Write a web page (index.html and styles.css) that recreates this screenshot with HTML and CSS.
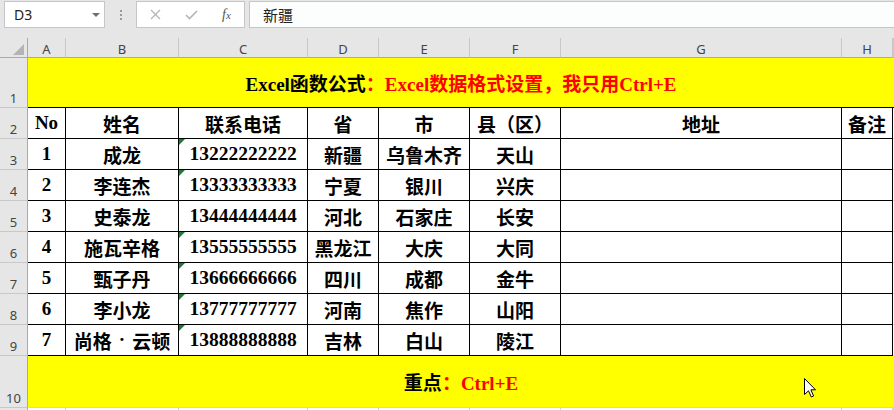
FILE: index.html
```html
<!DOCTYPE html>
<html lang="zh-CN">

<head>
  <meta charset="UTF-8">
  <title>Excel数据格式设置</title>
  <link rel="stylesheet" href="styles.css">
</head>

<body>

  <div class="bar">
    <div class="namebox">D3<i class="drop"></i></div>
    <div class="grip"><i></i><i></i><i></i></div>
    <div class="btns">
      <svg width="11" height="11" viewBox="0 0 11 11"><path d="M1 1L10 10M10 1L1 10" stroke="#b5b5b5" stroke-width="1.3" fill="none"/></svg>
      <svg width="13" height="10" viewBox="0 0 13 10"><path d="M1 5L4.5 8.5L12 1" stroke="#b5b5b5" stroke-width="1.6" fill="none"/></svg>
      <span class="fx">f<em>x</em></span>
    </div>
    <div class="formula">新疆</div>
  </div>

  <div class="sheet">
    <!-- 列标 -->
    <div class="corner"><svg width="11" height="11" viewBox="0 0 11 11"><path d="M0 11H11V0Z" fill="#b4b4b4"/></svg></div>
    <div class="col">A</div>
    <div class="col">B</div>
    <div class="col">C</div>
    <div class="col">D</div>
    <div class="col">E</div>
    <div class="col">F</div>
    <div class="col">G</div>
    <div class="col">H</div>
    <div class="col"></div>

    <!-- 第1行 标题 -->
    <div class="row">1</div>
    <div class="banner">Excel函数公式<span class="red">：Excel数据格式设置，我只用Ctrl+E</span></div>

    <!-- 第2行 表头 -->
    <div class="row">2</div>
    <div class="c">No</div>
    <div class="c">姓名</div>
    <div class="c">联系电话</div>
    <div class="c">省</div>
    <div class="c">市</div>
    <div class="c">县（区）</div>
    <div class="c">地址</div>
    <div class="c">备注</div>
    <div class="cut"></div>

    <div class="row">3</div>
    <div class="c">1</div>
    <div class="c">成龙</div>
    <div class="c t mark">13222222222</div>
    <div class="c">新疆</div>
    <div class="c">乌鲁木齐</div>
    <div class="c">天山</div>
    <div class="c"></div>
    <div class="c"></div>
    <div class="cut"></div>

    <div class="row">4</div>
    <div class="c">2</div>
    <div class="c">李连杰</div>
    <div class="c t mark">13333333333</div>
    <div class="c">宁夏</div>
    <div class="c">银川</div>
    <div class="c">兴庆</div>
    <div class="c"></div>
    <div class="c"></div>
    <div class="cut"></div>

    <div class="row">5</div>
    <div class="c">3</div>
    <div class="c">史泰龙</div>
    <div class="c t">13444444444</div>
    <div class="c">河北</div>
    <div class="c">石家庄</div>
    <div class="c">长安</div>
    <div class="c"></div>
    <div class="c"></div>
    <div class="cut"></div>

    <div class="row">6</div>
    <div class="c">4</div>
    <div class="c">施瓦辛格</div>
    <div class="c t mark">13555555555</div>
    <div class="c">黑龙江</div>
    <div class="c">大庆</div>
    <div class="c">大同</div>
    <div class="c"></div>
    <div class="c"></div>
    <div class="cut"></div>

    <div class="row">7</div>
    <div class="c">5</div>
    <div class="c">甄子丹</div>
    <div class="c t mark">13666666666</div>
    <div class="c">四川</div>
    <div class="c">成都</div>
    <div class="c">金牛</div>
    <div class="c"></div>
    <div class="c"></div>
    <div class="cut"></div>

    <div class="row">8</div>
    <div class="c">6</div>
    <div class="c">李小龙</div>
    <div class="c t mark">13777777777</div>
    <div class="c">河南</div>
    <div class="c">焦作</div>
    <div class="c">山阳</div>
    <div class="c"></div>
    <div class="c"></div>
    <div class="cut"></div>

    <div class="row">9</div>
    <div class="c">7</div>
    <div class="c">尚格<span class="dot">·</span>云顿</div>
    <div class="c t mark">13888888888</div>
    <div class="c">吉林</div>
    <div class="c">白山</div>
    <div class="c">陵江</div>
    <div class="c"></div>
    <div class="c"></div>
    <div class="cut"></div>

    <!-- 第10行 -->
    <div class="row">10</div>
    <div class="banner end">重点<span class="red">：Ctrl+E</span></div>

    <!-- 第11行只露出一条边 -->
    <div class="row"></div>
    <div class="e"></div>
    <div class="e"></div>
    <div class="e"></div>
    <div class="e"></div>
    <div class="e"></div>
    <div class="e"></div>
    <div class="e"></div>
    <div class="e"></div>
    <div class="e"></div>
  </div>

  <svg class="cursor" width="12" height="20" viewBox="0 0 12 20">
    <path d="M0.5 0.5V16.5L4.5 12.8L7.3 19L9.6 18L6.9 11.8H11.5Z" fill="#fff" stroke="#000" stroke-width="1" stroke-linejoin="round"/>
  </svg>

</body>

</html>
```

FILE: styles.css
```css
* {
  padding: 0;
  margin: 0;
  box-sizing: border-box;
}

body {
  position: relative;
  width: 894px;
  height: 410px;
  overflow: hidden;
  background: #fff;
  font-family: "Noto Sans", "Noto Sans CJK SC", sans-serif;
}

/* 编辑栏 */
.bar {
  display: flex;
  align-items: flex-start;
  height: 38px;
  padding-top: 1px;
  background: #e6e6e6;
}

.namebox {
  display: flex;
  align-items: center;
  width: 101px;
  height: 27px;
  margin-left: 4px;
  padding-left: 9px;
  border: 1px solid #c6c6c6;
  background: #fff;
  font-size: 14px;
  color: #222;
}

.namebox .drop {
  margin-left: auto;
  margin-right: 4px;
  border-left: 4px solid transparent;
  border-right: 4px solid transparent;
  border-top: 4px solid #707070;
}

.grip {
  display: flex;
  flex-direction: column;
  align-items: center;
  justify-content: center;
  gap: 2px;
  width: 31px;
  height: 27px;
}

.grip i {
  width: 2px;
  height: 2px;
  background: #9a9a9a;
}

.btns {
  display: flex;
  align-items: center;
  gap: 24px;
  width: 109px;
  height: 27px;
  padding-left: 13px;
  border: 1px solid #c6c6c6;
  background: #fff;
}

.btns .fx {
  font: italic 14px "Liberation Serif", serif;
  color: #555;
}

.btns .fx em {
  font-size: 11px;
}

.formula {
  display: flex;
  align-items: center;
  flex: 1;
  height: 27px;
  margin-left: 4px;
  padding-left: 13px;
  border: 1px solid #c6c6c6;
  border-right: 0;
  background: #fcfefe;
  font: 15px "Noto Sans CJK SC", sans-serif;
  color: #222;
}

/* 表格 */
.sheet {
  display: grid;
  grid-template-columns: 28px 38px 113px 129px 71px 91px 91px 281px 51px 1fr;
  grid-template-rows: 20px 50px 31px repeat(7, 31px) 52px 2px;
}

.corner {
  display: flex;
  justify-content: flex-end;
  align-items: flex-end;
  padding: 0 3px 2px 0;
  background: #e6e6e6;
  border-right: 1px solid #a9a9a9;
  border-bottom: 1px solid #a9a9a9;
}

.col {
  display: flex;
  justify-content: center;
  align-items: center;
  padding-top: 3px;
  background: #e6e6e6;
  border-right: 1px solid #c8c8c8;
  border-bottom: 1px solid #a9a9a9;
  font-size: 13px;
  color: #444;
}

.row {
  display: flex;
  justify-content: center;
  align-items: flex-end;
  padding-bottom: 2px;
  background: #e6e6e6;
  border-right: 1px solid #a9a9a9;
  border-bottom: 1px solid #c8c8c8;
  font-size: 13px;
  line-height: 13px;
  color: #444;
}

.banner {
  grid-column: 2 / -1;
  display: flex;
  justify-content: center;
  align-items: center;
  background: #ff0;
  border-bottom: 1px solid #000;
  font: bold 19px "Liberation Serif", "Noto Sans CJK SC", serif;
  color: #000;
}

.banner.end {
  border-bottom-color: #d4d4d4;
}

.red {
  color: #f00;
}

.c {
  display: flex;
  justify-content: center;
  align-items: center;
  border-right: 1px solid #000;
  border-bottom: 1px solid #000;
  font: bold 19px "Liberation Serif", "Noto Sans CJK SC", serif;
  color: #000;
  white-space: nowrap;
}

.c.t {
  font-size: 19.5px;
}

.c .dot {
  padding: 0 7px;
}

/* 文本格式数字的绿色小三角 */
.mark {
  position: relative;
}

.mark::before {
  content: "";
  position: absolute;
  top: 0;
  left: 0;
  border-top: 6px solid #1d7a36;
  border-right: 6px solid transparent;
}

.cut {
  border-bottom: 1px solid #d4d4d4;
}

.e {
  border-right: 1px solid #d4d4d4;
}

.cursor {
  position: absolute;
  left: 804px;
  top: 378px;
}
```
